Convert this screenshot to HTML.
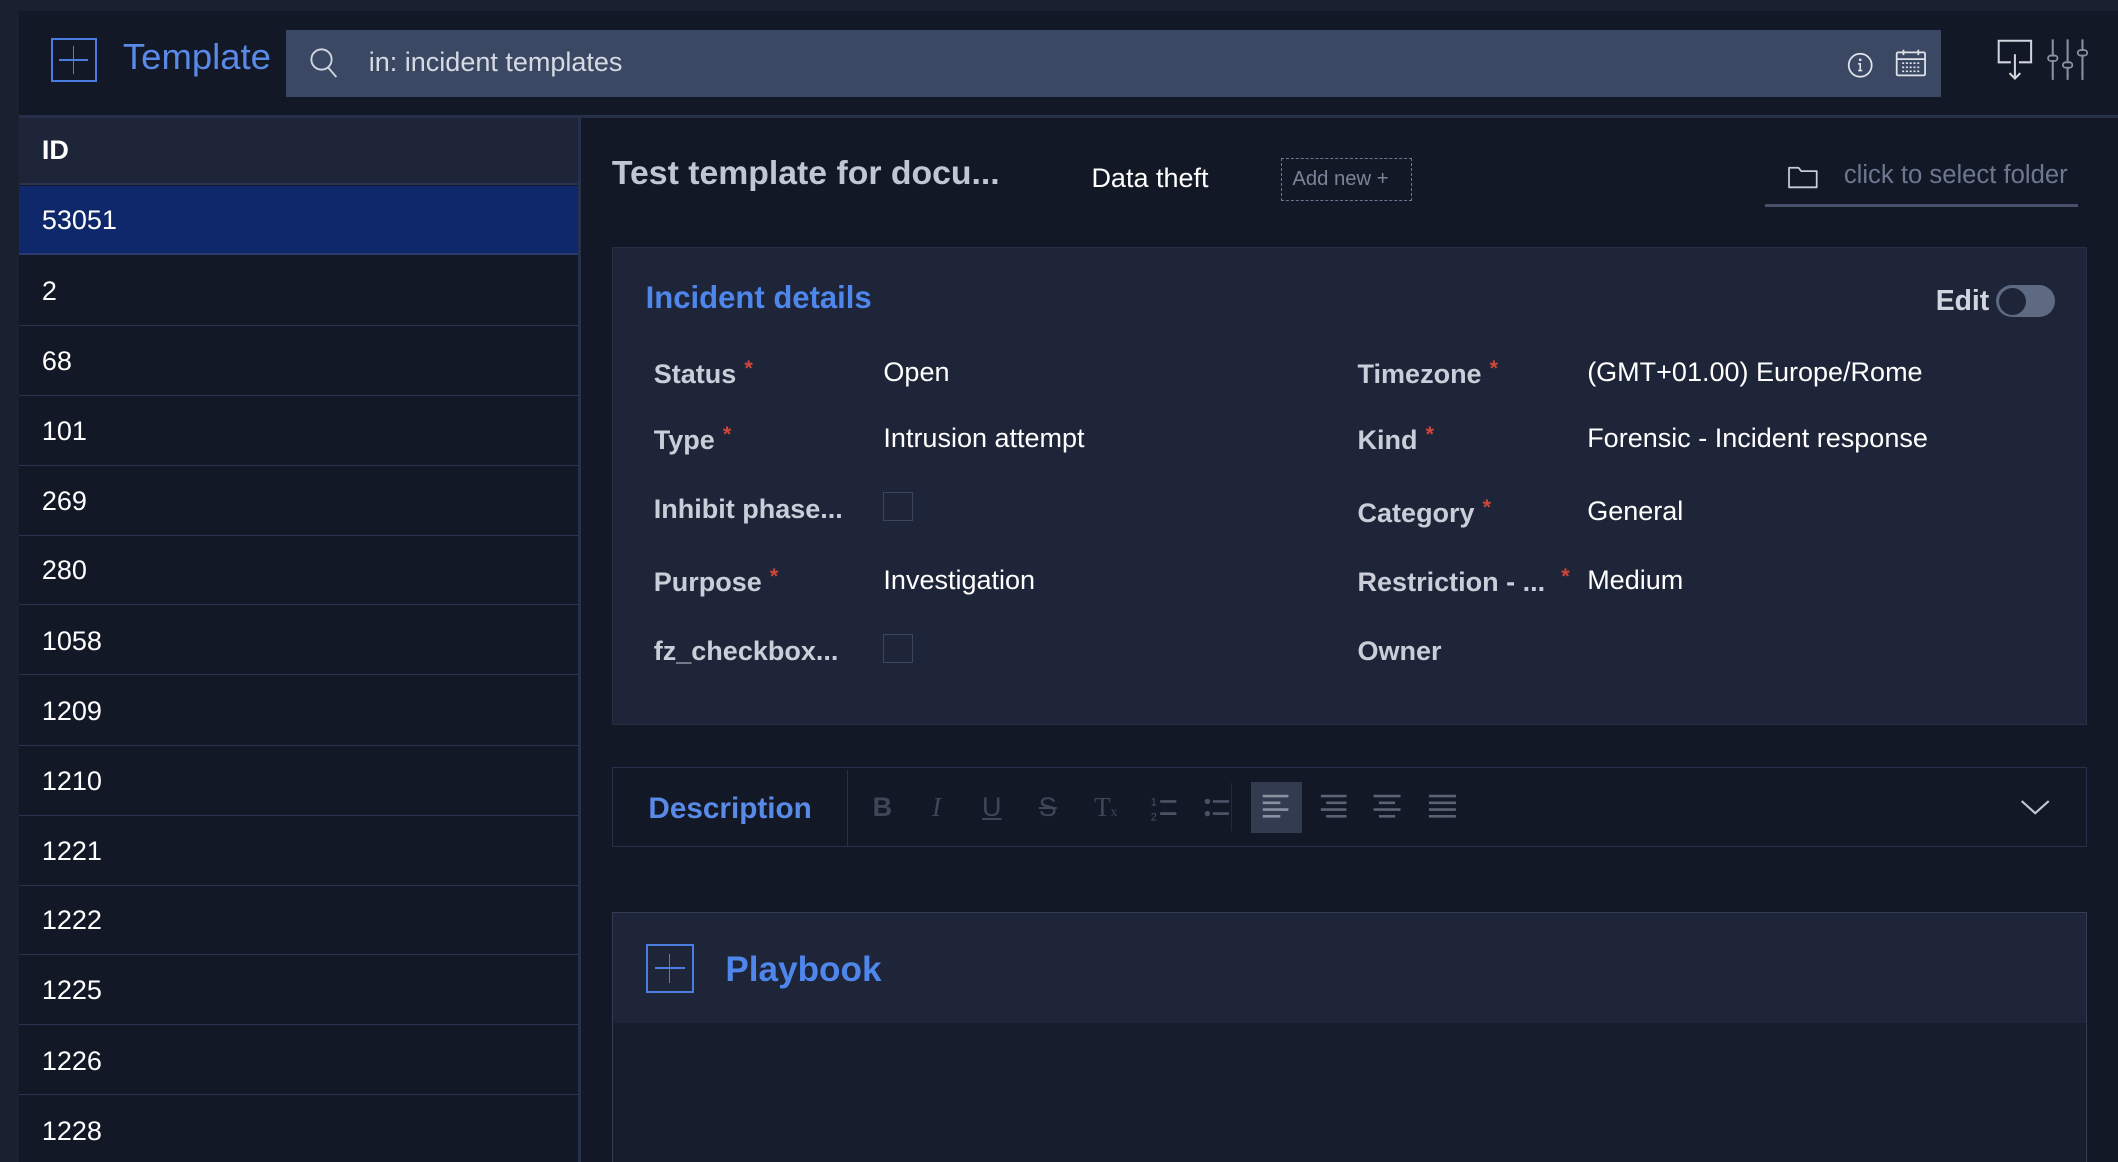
<!DOCTYPE html>
<html><head><meta charset="utf-8"><style>
html,body{margin:0;padding:0;background:#1a2030;overflow:hidden}
#r{zoom:1.3508;position:relative;width:1568px;height:860px;font-family:"Liberation Sans",sans-serif;background:#1a2030}
.a{position:absolute}
.main{left:14px;top:8px;width:1554px;height:852px;background:#131826}
.row{position:absolute;left:14px;width:414px;height:51px;border-bottom:1px solid #2a3450;color:#fff;font-size:20px;line-height:51px;padding-left:17px;box-sizing:border-box}
.lbl{position:absolute;color:#c9ced8;font-size:20px;font-weight:bold}
.lbl i{color:#d0463a;font-style:normal;font-size:16px;vertical-align:6px;margin-left:6px}
.val{position:absolute;color:#fff;font-size:20px}
.cb{position:absolute;width:22px;height:22px;border:1px solid #3a4560;box-sizing:border-box}
.tb{position:absolute;top:586px;color:#3f4658;font-size:20px;font-weight:bold}
</style></head><body><div id="r">
<div class="a main"></div>
<div class="a" style="left:14px;top:85px;width:1554px;height:2px;background:#27304a"></div>
<div class="a" style="left:38px;top:28px;width:34px;height:33px;border:2px solid #4a7de0;box-sizing:border-box"></div>
<div class="a" style="left:54px;top:34px;width:1px;height:21px;background:#4a7de0"></div>
<div class="a" style="left:44px;top:44px;width:21px;height:1px;background:#4a7de0"></div>
<div class="a" style="left:91px;top:27px;color:#5a8ae8;font-size:27px">Template</div>
<div class="a" style="left:212px;top:22px;width:1225px;height:50px;background:#3a4863"></div>
<svg class="a" style="left:228px;top:34px" width="24" height="26" viewBox="0 0 24 26"><circle cx="10" cy="10" r="7.5" fill="none" stroke="#d0d5de" stroke-width="1.4"/><path d="M15 16l6 7" stroke="#d0d5de" stroke-width="1.4"/></svg>
<div class="a" style="left:273px;top:35px;color:#d5dae3;font-size:20px">in: incident templates</div>
<svg class="a" style="left:1365px;top:36px" width="24" height="24"><circle cx="12" cy="12" r="8.5" fill="none" stroke="#e0e4ea" stroke-width="1.3"/><circle cx="12" cy="8" r="1" fill="#e0e4ea"/><path d="M10.5 11h1.5v5M10.5 16h3" stroke="#e0e4ea" stroke-width="1.2" fill="none"/></svg>
<svg class="a" style="left:1402px;top:35px" width="26" height="24"><rect x="2" y="4" width="21" height="17" rx="1" fill="none" stroke="#e0e4ea" stroke-width="1.3"/><path d="M2 9h21M7 2v4M18 2v4" stroke="#e0e4ea" stroke-width="1.3"/><path d="M6 12h14M6 15h14M6 18h14" stroke="#e0e4ea" stroke-width="1.2" stroke-dasharray="1.5 1.3"/></svg>
<svg class="a" style="left:1478px;top:28px" width="28" height="32"><path d="M11 18H2V2h24v16h-9" fill="none" stroke="#d0d5de" stroke-width="1.5"/><path d="M14 12v18M10 26l4 4 4-4" fill="none" stroke="#d0d5de" stroke-width="1.5"/></svg>
<svg class="a" style="left:1515px;top:28px" width="32" height="32"><path d="M5 1v30M16 1v30M27 1v30" stroke="#8a93a5" stroke-width="1.5"/><rect x="1.5" y="13" width="7" height="4" rx="2" fill="#131826" stroke="#8a93a5" stroke-width="1.3"/><rect x="12.5" y="18" width="7" height="4" rx="2" fill="#131826" stroke="#8a93a5" stroke-width="1.3"/><rect x="23.5" y="9" width="7" height="4" rx="2" fill="#131826" stroke="#8a93a5" stroke-width="1.3"/></svg>
<div class="a" style="left:428px;top:87px;width:2px;height:773px;background:#27304a"></div>
<div class="row" style="top:87px;height:50px;background:#1e2538;line-height:48px;border-bottom:2px solid #2a3450;font-weight:bold">ID</div>
<div class="row" style="top:138px;background:#0f286b;border-bottom:2px solid #2a3a70">53051</div>
<div class="row" style="top:190px">2</div>
<div class="row" style="top:242px">68</div>
<div class="row" style="top:294px">101</div>
<div class="row" style="top:346px">269</div>
<div class="row" style="top:397px">280</div>
<div class="row" style="top:449px">1058</div>
<div class="row" style="top:501px">1209</div>
<div class="row" style="top:553px">1210</div>
<div class="row" style="top:605px">1221</div>
<div class="row" style="top:656px">1222</div>
<div class="row" style="top:708px">1225</div>
<div class="row" style="top:760px">1226</div>
<div class="row" style="top:812px">1228</div>
<div class="a" style="left:453px;top:114px;color:#c0c6d2;font-size:25px;font-weight:bold">Test template for docu...</div>
<div class="a" style="left:808px;top:121px;color:#fff;font-size:20px">Data theft</div>
<div class="a" style="left:948px;top:117px;width:97px;height:32px;border:1px dashed #6a7590;box-sizing:border-box;color:#7a8499;font-size:15px;line-height:30px;padding-left:8px">Add new +</div>
<svg class="a" style="left:1323px;top:121px" width="24" height="20"><path d="M1.5 3.5h7l2 2.5h11.5v12h-20.5z" fill="none" stroke="#c8ccd4" stroke-width="1.3" stroke-linejoin="round"/></svg>
<div class="a" style="left:1365px;top:119px;color:#6c7890;font-size:19px">click to select folder</div>
<div class="a" style="left:1307px;top:151px;width:231px;height:2px;background:#46506a"></div>
<div class="a" style="left:453px;top:183px;width:1092px;height:354px;background:#1e2538;border:1px solid #262e45;box-sizing:border-box"></div>
<div class="a" style="left:478px;top:207px;color:#4f86ec;font-size:23px;font-weight:bold">Incident details</div>
<div class="a" style="left:1433px;top:211px;color:#d0d5de;font-size:21px;font-weight:bold">Edit</div>
<div class="a" style="left:1478px;top:211px;width:43px;height:24px;border-radius:12px;background:#5d6a82"></div>
<div class="a" style="left:1480px;top:213px;width:20px;height:20px;border-radius:10px;background:#1e2538"></div>
<div class="lbl" style="left:484px;top:263px">Status<i>*</i></div>
<div class="val" style="left:654px;top:264px">Open</div>
<div class="lbl" style="left:484px;top:312px">Type<i>*</i></div>
<div class="val" style="left:654px;top:313px">Intrusion attempt</div>
<div class="lbl" style="left:484px;top:366px">Inhibit phase...</div>
<div class="cb" style="left:654px;top:364px"></div>
<div class="lbl" style="left:484px;top:417px">Purpose<i>*</i></div>
<div class="val" style="left:654px;top:418px">Investigation</div>
<div class="lbl" style="left:484px;top:471px">fz_checkbox...</div>
<div class="cb" style="left:654px;top:469px"></div>
<div class="lbl" style="left:1005px;top:263px">Timezone<i>*</i></div>
<div class="val" style="left:1175px;top:264px">(GMT+01.00) Europe/Rome</div>
<div class="lbl" style="left:1005px;top:312px">Kind<i>*</i></div>
<div class="val" style="left:1175px;top:313px">Forensic - Incident response</div>
<div class="lbl" style="left:1005px;top:366px">Category<i>*</i></div>
<div class="val" style="left:1175px;top:367px">General</div>
<div class="lbl" style="left:1005px;top:417px">Restriction - ...<i style="margin-left:12px">*</i></div>
<div class="val" style="left:1175px;top:418px">Medium</div>
<div class="lbl" style="left:1005px;top:471px">Owner</div>
<div class="a" style="left:453px;top:568px;width:1092px;height:59px;border:1px solid #27304a;box-sizing:border-box"></div>
<div class="a" style="left:627px;top:570px;width:1px;height:56px;background:#27304a"></div>
<div class="a" style="left:480px;top:586px;color:#5a8ae8;font-size:22px;font-weight:bold">Description</div>
<div class="tb" style="left:646px">B</div>
<div class="tb" style="left:690px;font-style:italic;font-weight:normal;font-family:'Liberation Serif',serif">I</div>
<div class="tb" style="left:727px;text-decoration:underline;font-weight:normal">U</div>
<div class="tb" style="left:769px;text-decoration:line-through;font-weight:normal">S</div>
<div class="tb" style="left:810px;font-weight:normal;font-family:'Liberation Serif',serif">T<span style="font-size:10px">x</span></div>
<div class="a" style="left:911px;top:580px;width:1px;height:35px;background:#222a3c"></div>
<svg class="a" style="left:850px;top:586px" width="240" height="24"><g stroke="#4a5265" stroke-width="2"><path d="M9 7h12M9 16h12M48 7h12M48 16h12"/><circle cx="44" cy="7" r="1" fill="#4a5265"/><circle cx="44" cy="16" r="1" fill="#4a5265"/></g><text x="2" y="10" font-size="8" fill="#4a5265" font-family="Liberation Sans">1</text><text x="2" y="21" font-size="8" fill="#4a5265" font-family="Liberation Sans">2</text></svg>
<div class="a" style="left:926px;top:579px;width:38px;height:38px;background:#323b50"></div>
<svg class="a" style="left:930px;top:586px" width="160" height="24"><g stroke="#8a92a2" stroke-width="2"><path d="M5 3h19M5 8h13M5 13h19M5 18h13"/></g><g stroke="#5a6274" stroke-width="2"><path d="M48 3h19M52 8h15M48 13h19M52 18h15M87 3h20M91 8h12M87 13h20M91 18h12M128 3h20M128 8h20M128 13h20M128 18h20"/></g></svg>
<svg class="a" style="left:1495px;top:590px" width="24" height="16"><path d="M2 3l10 9 10-9" fill="none" stroke="#c0c6d2" stroke-width="1.6"/></svg>
<div class="a" style="left:453px;top:675px;width:1092px;height:185px;background:#171d2c;border:1px solid #333d58;border-bottom:none;box-sizing:border-box"></div>
<div class="a" style="left:454px;top:676px;width:1090px;height:81px;background:#1e2538"></div>
<div class="a" style="left:478px;top:699px;width:36px;height:36px;border:2px solid #4a7de0;box-sizing:border-box"></div>
<div class="a" style="left:495px;top:706px;width:1px;height:22px;background:#4a7de0"></div>
<div class="a" style="left:485px;top:716px;width:22px;height:1px;background:#4a7de0"></div>
<div class="a" style="left:537px;top:703px;color:#4f86ec;font-size:26px;font-weight:bold">Playbook</div>
</div></body></html>
